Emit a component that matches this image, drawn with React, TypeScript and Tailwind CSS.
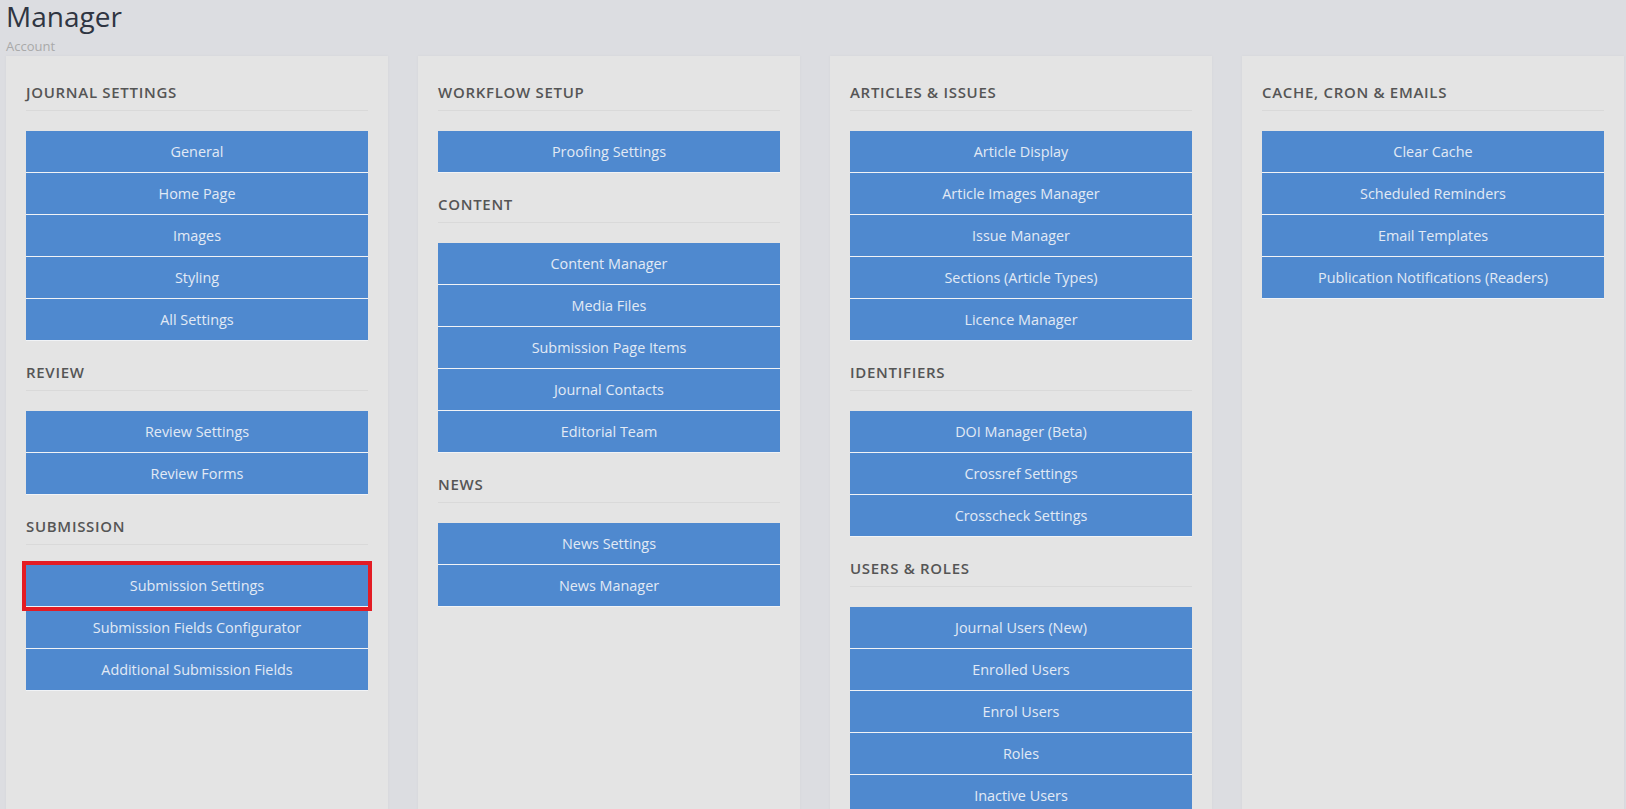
const columns: { title: string; items: string[] }[][] = [
  [
    { title: "Journal Settings", items: ["General", "Home Page", "Images", "Styling", "All Settings"] },
    { title: "Review", items: ["Review Settings", "Review Forms"] },
    {
      title: "Submission",
      items: ["Submission Settings", "Submission Fields Configurator", "Additional Submission Fields"],
    },
  ],
  [
    { title: "Workflow Setup", items: ["Proofing Settings"] },
    {
      title: "Content",
      items: ["Content Manager", "Media Files", "Submission Page Items", "Journal Contacts", "Editorial Team"],
    },
    { title: "News", items: ["News Settings", "News Manager"] },
  ],
  [
    {
      title: "Articles & Issues",
      items: ["Article Display", "Article Images Manager", "Issue Manager", "Sections (Article Types)", "Licence Manager"],
    },
    { title: "Identifiers", items: ["DOI Manager (Beta)", "Crossref Settings", "Crosscheck Settings"] },
    {
      title: "Users & Roles",
      items: ["Journal Users (New)", "Enrolled Users", "Enrol Users", "Roles", "Inactive Users", "Suspended Users"],
    },
  ],
  [
    {
      title: "Cache, Cron & Emails",
      items: ["Clear Cache", "Scheduled Reminders", "Email Templates", "Publication Notifications (Readers)"],
    },
  ],
];

// the one link currently flagged in the menu
const ACTIVE = "Submission Settings";

function Section({ title, items, first }: { title: string; items: string[]; first: boolean }) {
  return (
    <div className={first ? "" : "mt-[21px]"}>
      <h3 className="border-b border-[#d9d9d9] pb-[8px] text-[15px] leading-5 font-semibold uppercase tracking-[0.7px] text-[#555]">
        {title}
      </h3>
      <div className="mt-5 flex flex-col">
        {items.map((item) => (
          <a
            key={item}
            href="#"
            className={`block h-[42px] border-b border-[#f1f3f6] bg-[#4f89cf] text-center text-[14.4px] leading-[41px] text-[#e2eaf5] ${
              item === ACTIVE ? "relative z-10 outline-4 outline-[#e31c24]" : ""
            }`}
          >
            {item}
          </a>
        ))}
      </div>
    </div>
  );
}

export default function App() {
  return (
    <div className="h-[809px] overflow-hidden bg-[#dcdde1] font-['Open_Sans',sans-serif]">
      {/* page header */}
      <div className="px-[6px]">
        <h1 className="text-[28px] leading-[32px] text-[#2f3542]">Manager</h1>
        <p className="mt-[5px] text-[13px] leading-[18px] text-[#a9a9a9]">Account</p>
      </div>
      {/* menu columns */}
      <div className="mt-px grid grid-cols-[repeat(4,382px)] gap-[30px] pl-[6px]">
        {columns.map((sections, i) => (
          <div key={i} className="min-h-[760px] bg-[#e4e4e4] px-5 pt-[26px] shadow-[0_0_3px_rgba(0,0,0,0.04)]">
            {sections.map((s, j) => (
              <Section key={s.title} title={s.title} items={s.items} first={j === 0} />
            ))}
          </div>
        ))}
      </div>
    </div>
  );
}
